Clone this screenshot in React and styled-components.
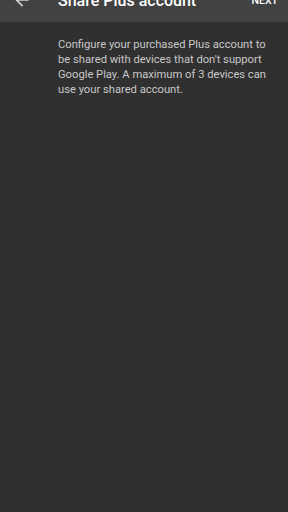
import React from 'react'
import styled, { createGlobalStyle } from 'styled-components'

const Global = createGlobalStyle`
  html, body {
    margin: 0;
    padding: 0;
    background: #303030;
  }
  body {
    font-family: Roboto, "Noto Sans", sans-serif;
  }
`

const Screen = styled.div`
  width: 288px;
  height: 512px;
  background: #303030;
  overflow: hidden;
  display: flex;
  flex-direction: column;
`

const Toolbar = styled.div`
  height: 22px;
  background: #424242;
  overflow: hidden;
  flex-shrink: 0;
`

const ToolbarRow = styled.div`
  display: flex;
  align-items: center;
  height: 24px;
  margin-top: -12px;
  padding: 0 10px 0 10px;
`

const BackButton = styled.div`
  width: 24px;
  height: 24px;
  display: flex;
  align-items: center;
  justify-content: center;
  color: #d0d0d0;
`

const Title = styled.h1`
  margin: 0 0 0 24px;
  flex: 1;
  font-size: 16px;
  font-weight: 500;
  color: #ffffff;
  white-space: nowrap;
`

const Action = styled.div`
  font-size: 10.5px;
  font-weight: 500;
  color: #ffffff;
`

const Body = styled.div`
  padding: 15px 12px 0 58px;
`

const Description = styled.p`
  margin: 0;
  font-size: 11.2px;
  line-height: 15px;
  color: #c8c8c8;
`

const ArrowBack = () => (
  <svg width="20" height="20" viewBox="0 0 24 24" fill="currentColor">
    <path d="M20 11H7.83l5.59-5.59L12 4l-8 8 8 8 1.41-1.41L7.83 13H20v-2z" />
  </svg>
)

export default function App() {
  return (
    <Screen>
      <Global />
      <Toolbar>
        <ToolbarRow>
          <BackButton>
            <ArrowBack />
          </BackButton>
          <Title>Share Plus account</Title>
          <Action>NEXT</Action>
        </ToolbarRow>
      </Toolbar>
      <Body>
        <Description>
          Configure your purchased Plus account to be shared with devices that don't support
          Google Play. A maximum of 3 devices can use your shared account.
        </Description>
      </Body>
    </Screen>
  )
}
